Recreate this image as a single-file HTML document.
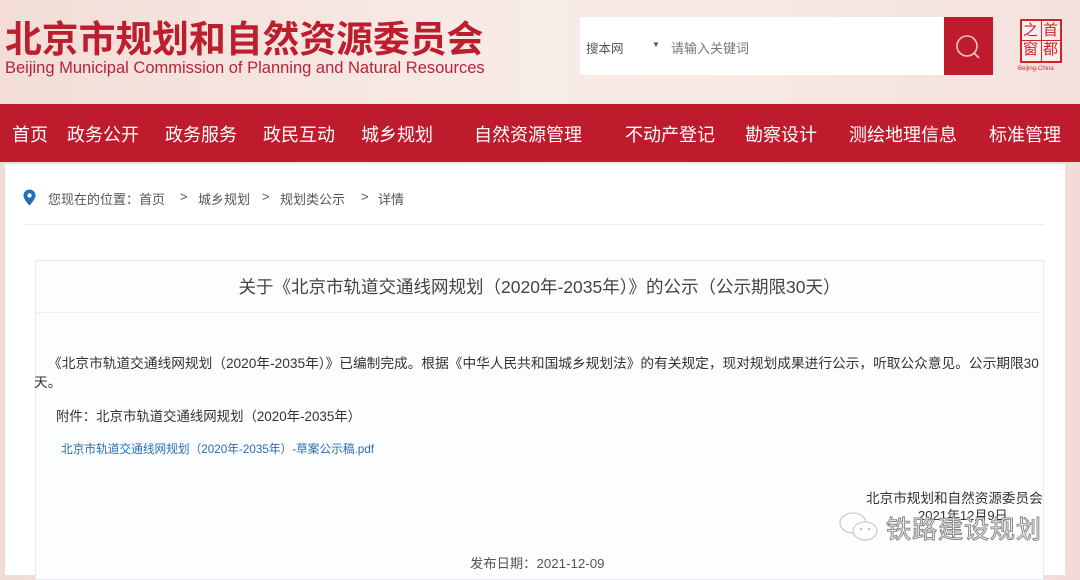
<!DOCTYPE html>
<html><head><meta charset="utf-8"><style>
*{margin:0;padding:0;box-sizing:border-box}
body{width:1080px;height:575px;overflow:hidden;font-family:"Liberation Sans","Noto Sans CJK SC",sans-serif;background:linear-gradient(90deg,#f2dcd6,#f7e9e6 40%,#f5e4e0 70%,#f3dcd8);position:relative}
.abs{position:absolute;white-space:nowrap}
.hdr{position:absolute;left:0;top:0;width:1080px;height:104px;background:linear-gradient(90deg,#f3ddd6,#f8ece8 50%,#f4e2de)}
.nav{position:absolute;left:0;top:104px;width:1080px;height:58px;background:#be1b2d}
.nav span{position:absolute;top:17px;font-size:18px;color:#fff}
.main{position:absolute;left:5px;top:164px;width:1060px;height:411px;background:#fff}
.box{position:absolute;left:35px;top:260px;width:1009px;height:320px;border:1px solid #e8eaee;background:#fcfdfe}
.t{font-size:13.7px;color:#333}
.bc{position:absolute;top:189px;font-size:13px;color:#555;white-space:nowrap}
</style></head><body>
<div class="hdr"></div>
<div class="abs" style="left:5px;top:9px;font-size:36.8px;font-weight:bold;color:#bc1e2e">北京市规划和自然资源委员会</div>
<div class="abs" style="left:5px;top:59px;font-size:16.5px;color:#b5243a">Beijing Municipal Commission of Planning and Natural Resources</div>
<div class="abs" style="left:580px;top:17px;width:365px;height:58px;background:#fff"></div>
<div class="abs" style="left:586px;top:38px;font-size:12.5px;color:#555">搜本网</div>
<div class="abs" style="left:652px;top:40px;font-size:8px;color:#555">▼</div>
<div class="abs" style="left:671px;top:38px;font-size:13px;color:#777">请输入关键词</div>
<div class="abs" style="left:944px;top:17px;width:49px;height:58px;background:#be1b2d"></div>
<svg class="abs" style="left:954px;top:33px" width="28" height="28"><circle cx="13" cy="13" r="10" fill="none" stroke="#f1c4c8" stroke-width="1.6"/><path d="M20 20l5 5" stroke="#f1c4c8" stroke-width="1.6"/></svg>
<div class="abs" style="left:1020px;top:19px;width:42px;height:44px;border:2px solid #d2232a;background:#fbeeee"></div>
<div class="abs" style="left:1041px;top:19px;width:1px;height:44px;background:#d2232a"></div>
<div class="abs" style="left:1020px;top:40px;width:42px;height:1px;background:#d2232a"></div>
<div class="abs" style="left:1023px;top:21px;font-size:15px;color:#d2232a;line-height:19px">之<br>窗</div>
<div class="abs" style="left:1043px;top:21px;font-size:15px;color:#d2232a;line-height:19px">首<br>都</div>
<div class="abs" style="left:1018px;top:66px;font-size:6px;color:#d2232a">Beijing-China</div>
<div class="nav">
<span style="left:12px">首页</span><span style="left:67px">政务公开</span><span style="left:165px">政务服务</span><span style="left:263px">政民互动</span><span style="left:361px">城乡规划</span><span style="left:474px">自然资源管理</span><span style="left:625px">不动产登记</span><span style="left:745px">勘察设计</span><span style="left:849px">测绘地理信息</span><span style="left:989px">标准管理</span>
</div>
<div class="main"></div>
<svg class="abs" style="left:23px;top:189px" width="13" height="17"><path d="M6.5 0.5a6 6 0 0 1 6 6c0 4-6 10-6 10s-6-6-6-10a6 6 0 0 1 6-6z" fill="#1f6fb8"/><circle cx="6.5" cy="6.5" r="2.2" fill="#fff"/></svg>
<div class="bc" style="left:48px">您现在的位置：首页</div>
<div class="bc" style="left:180px">&gt;</div>
<div class="bc" style="left:198px">城乡规划</div>
<div class="bc" style="left:262px">&gt;</div>
<div class="bc" style="left:280px">规划类公示</div>
<div class="bc" style="left:361px">&gt;</div>
<div class="bc" style="left:378px">详情</div>
<div class="abs" style="left:24px;top:224px;width:1020px;height:1px;background:#eceff2"></div>
<div class="box"></div>
<div class="abs" style="left:36px;top:312px;width:1007px;height:1px;background:#eceff2"></div>
<div class="abs" style="left:35px;top:274px;width:1009px;text-align:center;font-size:17.5px;color:#444">关于《北京市轨道交通线网规划（2020年-2035年）》的公示（公示期限30天）</div>
<div class="abs t" style="left:48px;top:352px">《北京市轨道交通线网规划（2020年-2035年）》已编制完成。根据《中华人民共和国城乡规划法》的有关规定，现对规划成果进行公示，听取公众意见。公示期限30</div>
<div class="abs t" style="left:34px;top:371px">天。</div>
<div class="abs" style="left:56px;top:405px;font-size:13.4px;color:#333">附件：北京市轨道交通线网规划（2020年-2035年）</div>
<div class="abs" style="left:61px;top:440px;font-size:11.7px;color:#2a6db5">北京市轨道交通线网规划（2020年-2035年）-草案公示稿.pdf</div>
<div class="abs" style="left:866px;top:487px;font-size:13.6px;color:#333">北京市规划和自然资源委员会</div>
<div class="abs" style="left:918px;top:505px;font-size:13px;color:#333">2021年12月9日</div>
<svg class="abs" style="left:838px;top:510px" width="44" height="36"><ellipse cx="15" cy="13" rx="13" ry="10" fill="#fff" stroke="#ccc" stroke-width="1.3"/><ellipse cx="27" cy="21" rx="12" ry="9" fill="#fff" stroke="#ccc" stroke-width="1.3"/><circle cx="23" cy="19" r="1.2" fill="#bbb"/><circle cx="31" cy="19" r="1.2" fill="#bbb"/></svg>
<div class="abs" style="left:886px;top:510px;font-size:25px;color:#fff;-webkit-text-stroke:1px #888;letter-spacing:1px">铁路建设规划</div>
<div class="abs" style="left:470px;top:553px;font-size:13.3px;color:#555">发布日期：2021-12-09</div>
</body></html>
